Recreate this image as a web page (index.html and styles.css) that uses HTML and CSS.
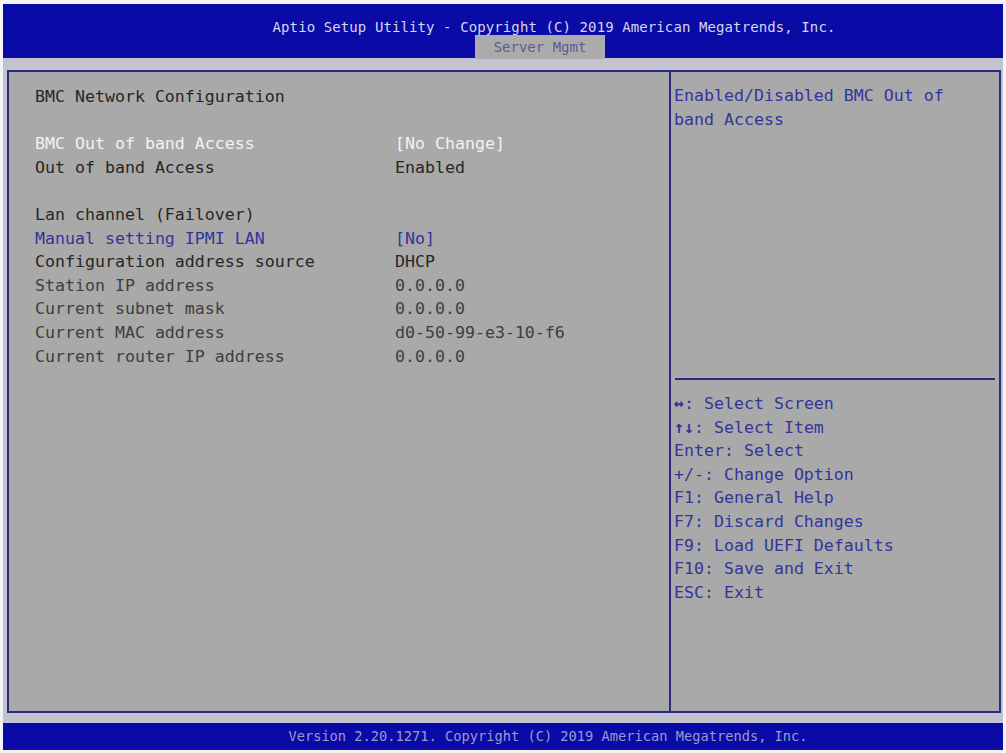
FILE: index.html
```html
<!DOCTYPE html>
<html>
<head>
<meta charset="utf-8">
<link rel="stylesheet" href="styles.css">
</head>
<body>
<div class="screen">
  <header class="header">
    <div class="title">Aptio Setup Utility - Copyright (C) 2019 American Megatrends, Inc.</div>
    <div class="tab">Server Mgmt</div>
  </header>
  <div class="body">
    <div class="frame">
      <section class="main">
        <div class="row"><span class="label dark">BMC Network Configuration</span></div>
        <div class="row"></div>
        <div class="row"><span class="label white">BMC Out of band Access</span><span class="value white">[No Change]</span></div>
        <div class="row"><span class="label dark">Out of band Access</span><span class="value dark">Enabled</span></div>
        <div class="row"></div>
        <div class="row"><span class="label dark">Lan channel (Failover)</span></div>
        <div class="row"><span class="label blue">Manual setting IPMI LAN</span><span class="value blue">[No]</span></div>
        <div class="row"><span class="label dark">Configuration address source</span><span class="value dark">DHCP</span></div>
        <div class="row"><span class="label dim">Station IP address</span><span class="value dim">0.0.0.0</span></div>
        <div class="row"><span class="label dim">Current subnet mask</span><span class="value dim">0.0.0.0</span></div>
        <div class="row"><span class="label dim">Current MAC address</span><span class="value dim">d0-50-99-e3-10-f6</span></div>
        <div class="row"><span class="label dim">Current router IP address</span><span class="value dim">0.0.0.0</span></div>
      </section>
      <aside class="help">
        <div class="help-top">
          <div class="row blue">Enabled/Disabled BMC Out of</div>
          <div class="row blue">band Access</div>
        </div>
        <div class="help-rule"></div>
        <div class="help-keys">
          <div class="row blue"><b class="key">&#8596;</b>: Select Screen</div>
          <div class="row blue"><b class="key">&#8593;&#8595;</b>: Select Item</div>
          <div class="row blue">Enter: Select</div>
          <div class="row blue">+/-: Change Option</div>
          <div class="row blue">F1: General Help</div>
          <div class="row blue">F7: Discard Changes</div>
          <div class="row blue">F9: Load UEFI Defaults</div>
          <div class="row blue">F10: Save and Exit</div>
          <div class="row blue">ESC: Exit</div>
        </div>
      </aside>
    </div>
  </div>
  <footer class="footer">Version 2.20.1271. Copyright (C) 2019 American Megatrends, Inc.</footer>
</div>
</body>
</html>
```
FILE: styles.css
```css
html, body {
  margin: 0;
  padding: 0;
  background: #f4f4f6;
}
body {
  font-family: "DejaVu Sans Mono", "Liberation Mono", monospace;
}
.screen {
  margin: 4px 3px 0 3px;
  width: 1000px;
}
.header {
  height: 54px;
  background: #0a0aa6;
  display: flex;
  flex-direction: column;
  align-items: center;
}
.title {
  padding-top: 15px;
  padding-left: 102px;
  font-size: 14px;
  line-height: 16px;
  color: #d6d6ec;
  letter-spacing: 0.1px;
}
.tab {
  margin-top: auto;
  align-self: flex-start;
  margin-left: 472px;
  width: 130px;
  height: 24px;
  background: #ababab;
  color: #5c5c94;
  font-size: 14px;
  line-height: 25px;
  text-align: center;
}
.body {
  background: #c3c3cf;
  padding: 12px 2px 10px 4px;
}
.frame {
  height: 639px;
  border: 2px solid #2a2a80;
  background: #a9a9a9;
  display: grid;
  grid-template-columns: 660px 1fr;
}
.main {
  padding: 13px 0 0 26px;
}
.row {
  height: 23.6px;
  line-height: 23.6px;
  font-size: 16.6px;
  display: flex;
  white-space: pre;
}
.label {
  width: 360px;
}
.value {
  flex: 1;
}
.dark { color: #262626; }
.dim { color: #3e3e3e; }
.white { color: #f2f2f2; }
.blue { color: #34349a; }
.key {
  font-weight: bold;
}
.help {
  border-left: 2px solid #2a2a80;
  display: flex;
  flex-direction: column;
}
.help-top {
  height: 306px;
  padding: 12px 0 0 3px;
  box-sizing: border-box;
}
.help-rule {
  height: 2px;
  margin: 0 4px 0 4px;
  background: #2a2a80;
}
.help-keys {
  padding: 12px 0 0 3px;
}
.footer {
  height: 27px;
  background: #0a0aa6;
  color: #9a9acc;
  font-size: 13.7px;
  line-height: 27px;
  text-align: center;
  padding-left: 90px;
  box-sizing: border-box;
}
```
